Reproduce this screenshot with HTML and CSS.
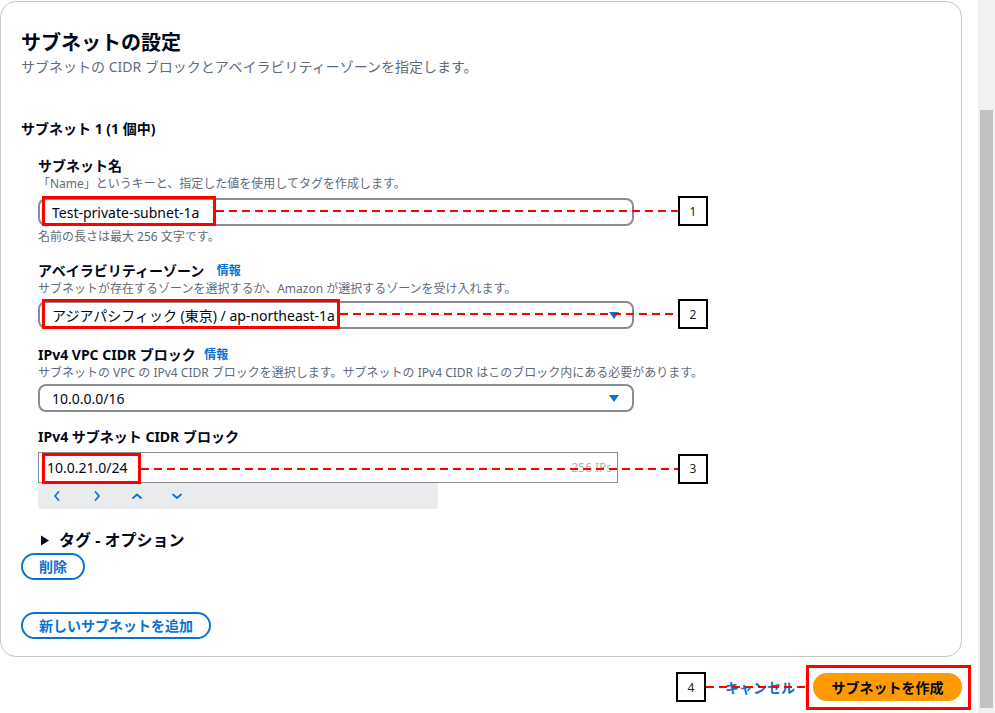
FILE: index.html
```html
<!DOCTYPE html>
<html lang="ja">
<head>
    <meta charset="UTF-8">
    <meta name="viewport" content="width=device-width, initial-scale=1.0">
    <title>サブネットの設定</title>
    <link rel="stylesheet" href="styles.css">
</head>
<body>

<div class="page">
    <main class="main">
        <section class="card">
            <h2 class="card-title">サブネットの設定</h2>
            <p class="card-desc">サブネットの CIDR ブロックとアベイラビリティーゾーンを指定します。</p>

            <h3 class="subnet-head">サブネット 1 (1 個中)</h3>

            <div class="fields">
                <!-- サブネット名 -->
                <div class="label lbl-name">サブネット名</div>
                <div class="hint">「Name」というキーと、指定した値を使用してタグを作成します。</div>
                <div class="ctl ctl-name">
                    <div class="input">Test-private-subnet-1a</div>
                    <div class="callout">
                        <span class="hl hl-name"></span>
                        <span class="dash"></span>
                        <span class="num">1</span>
                    </div>
                </div>
                <div class="hint hint-after">名前の長さは最大 256 文字です。</div>

                <!-- AZ -->
                <div class="label lbl-gap">アベイラビリティーゾーン <a class="info">情報</a></div>
                <div class="hint">サブネットが存在するゾーンを選択するか、Amazon が選択するゾーンを受け入れます。</div>
                <div class="ctl ctl-select">
                    <div class="input select">
                        <span>アジアパシフィック (東京) / ap-northeast-1a</span>
                        <span class="caret"></span>
                    </div>
                    <div class="callout">
                        <span class="hl hl-az"></span>
                        <span class="dash"></span>
                        <span class="num">2</span>
                    </div>
                </div>

                <!-- VPC CIDR -->
                <div class="label lbl-gap">IPv4 VPC CIDR ブロック <a class="info info-vpc">情報</a></div>
                <div class="hint">サブネットの VPC の IPv4 CIDR ブロックを選択します。サブネットの IPv4 CIDR はこのブロック内にある必要があります。</div>
                <div class="ctl ctl-select ctl-vpc">
                    <div class="input select">
                        <span>10.0.0.0/16</span>
                        <span class="caret"></span>
                    </div>
                </div>

                <!-- サブネット CIDR -->
                <div class="label lbl-cidr">IPv4 サブネット CIDR ブロック</div>
                <div class="ctl ctl-cidr">
                    <div class="cidr-input">
                        <span>10.0.21.0/24</span>
                        <span class="ips">256 IPs</span>
                    </div>
                    <div class="callout callout-cidr">
                        <span class="hl hl-cidr"></span>
                        <span class="dash"></span>
                        <span class="num">3</span>
                    </div>
                </div>
                <div class="stepper">
                    <svg width="12" height="12" viewBox="0 0 12 12"><path d="M7.5 2 L4 6 L7.5 10"/></svg>
                    <svg width="12" height="12" viewBox="0 0 12 12"><path d="M4.5 2 L8 6 L4.5 10"/></svg>
                    <svg width="12" height="12" viewBox="0 0 12 12"><path d="M2 8 L6 4.5 L10 8"/></svg>
                    <svg width="12" height="12" viewBox="0 0 12 12"><path d="M2 4.5 L6 8 L10 4.5"/></svg>
                </div>

                <div class="tags">
                    <svg class="tri" width="10" height="11" viewBox="0 0 10 11"><polygon points="1,0.5 9,5.5 1,10.5"/></svg>
                    <span>タグ - オプション</span>
                </div>
            </div>

            <button type="button" class="btn-outline btn-delete">削除</button>
            <button type="button" class="btn-outline btn-add">新しいサブネットを追加</button>
        </section>

        <div class="footer">
            <a class="cancel">キャンセル</a>
            <div class="cta-wrap">
                <button type="button" class="btn-primary">サブネットを作成</button>
                <span class="hl hl-cta"></span>
                <div class="callout-left">
                    <span class="num">4</span>
                    <span class="dash"></span>
                </div>
            </div>
        </div>
    </main>

    <div class="scrollbar"><div class="thumb"></div></div>
</div>

</body>
</html>
```

FILE: styles.css
```css
html, body {
    margin: 0;
    padding: 0;
    height: 100%;
    overflow: hidden;
    background: #fff;
}
body {
    font-family: "Noto Sans", "Noto Sans CJK JP", sans-serif;
    color: #000716;
    font-size: 14px;
}
.page {
    display: flex;
    height: 713px;
}
.main {
    width: 978px;
    padding-top: 1px;
}
.card {
    width: 962px;
    box-sizing: border-box;
    border: 1px solid #c6c6cd;
    border-radius: 16px;
    padding: 29px 20px 17px 20px;
}
.card-title {
    margin: 0;
    font-size: 20px;
    line-height: 24px;
    font-weight: 700;
}
.card-desc {
    margin: 2px 0 0;
    font-size: 14px;
    line-height: 20px;
    color: #5f6b7a;
}
.subnet-head {
    margin: 42px 0 0;
    font-size: 14px;
    line-height: 20px;
    font-weight: 700;
}
.fields {
    padding-left: 17px;
}
.label {
    height: 20px;
    display: flex;
    align-items: center;
    font-size: 14px;
    line-height: 20px;
    font-weight: 700;
    white-space: pre;
}
.lbl-name {
    margin-top: 17px;
}
.lbl-gap {
    margin-top: 16px;
}
.lbl-cidr {
    margin-top: 15px;
}
.info {
    margin-left: 9px;
    font-size: 12px;
    line-height: 16px;
    font-weight: 700;
    color: #0972d3;
}
.info-vpc {
    margin-left: 5px;
}
.hint {
    height: 16px;
    font-size: 12px;
    line-height: 16px;
    color: #5f6b7a;
}
.hint-after {
    margin-top: 3px;
}

/* controls */
.ctl {
    position: relative;
    width: 596px;
}
.ctl-name {
    margin-top: 6px;
}
.ctl-select {
    margin-top: 4px;
}
.ctl-vpc {
    margin-top: 3px;
}
.ctl-cidr {
    margin-top: 5px;
    width: 580px;
}
.input {
    height: 28px;
    box-sizing: border-box;
    border: 2px solid #8c8c94;
    border-radius: 8px;
    padding: 0 13px 0 12px;
    display: flex;
    align-items: center;
    font-size: 14px;
}
.select {
    justify-content: space-between;
}
.caret {
    width: 0;
    height: 0;
    border-left: 5px solid transparent;
    border-right: 5px solid transparent;
    border-top: 7px solid #0972d3;
}
.cidr-input {
    height: 31px;
    box-sizing: border-box;
    border: 1px solid #8c8c94;
    padding: 0 5px 0 8px;
    display: flex;
    align-items: center;
    justify-content: space-between;
    font-size: 14px;
}
.ips {
    font-size: 12px;
    color: #b4b6ba;
}
.stepper {
    width: 400px;
    height: 26px;
    box-sizing: border-box;
    background: #e9ebed;
    border-radius: 0 0 4px 4px;
    display: flex;
    align-items: center;
    gap: 28px;
    padding-left: 13px;
}
.stepper path {
    fill: none;
    stroke: #0972d3;
    stroke-width: 1.8;
    stroke-linecap: round;
    stroke-linejoin: round;
}
.tags {
    margin-top: 20px;
    height: 22px;
    display: flex;
    align-items: center;
    gap: 9px;
    padding-left: 2px;
    font-size: 16px;
    line-height: 22px;
    font-weight: 700;
}
.tri polygon {
    fill: #000716;
}

/* buttons */
.btn-outline {
    display: block;
    height: 27px;
    box-sizing: border-box;
    border: 2px solid #0972d3;
    border-radius: 14px;
    background: #fff;
    color: #0972d3;
    font-family: inherit;
    font-size: 14px;
    font-weight: 700;
    line-height: 1;
    padding: 0 16px;
}
.btn-delete {
    margin-top: 2px;
}
.btn-add {
    margin-top: 32px;
}

.footer {
    width: 962px;
    display: flex;
    justify-content: flex-end;
    align-items: center;
    gap: 18px;
    padding-top: 16px;
}
.cancel {
    color: #0972d3;
    font-weight: 700;
    font-size: 14px;
}
.cta-wrap {
    position: relative;
}
.btn-primary {
    display: block;
    height: 28px;
    width: 149px;
    border: none;
    border-radius: 14px;
    background: #ff9900;
    color: #000716;
    font-family: inherit;
    font-size: 14px;
    font-weight: 700;
    padding: 0;
}

/* annotations */
.callout {
    position: absolute;
    left: 4px;
    top: -2px;
    width: 666px;
    height: 30px;
    display: flex;
    align-items: center;
}
.callout-cidr {
    top: 1px;
    height: 31px;
}
.hl {
    box-sizing: border-box;
    border: 3px solid #ff0000;
    height: 100%;
    flex: none;
}
.hl-name {
    width: 174px;
}
.hl-az {
    width: 298px;
}
.hl-cidr {
    width: 99px;
}
.hl-cta {
    position: absolute;
    left: -7px;
    right: -9px;
    top: -8px;
    bottom: -9px;
    height: auto;
}
.dash {
    flex: 1;
    height: 2px;
    background: repeating-linear-gradient(90deg, #ff0000 0 8px, transparent 8px 13px);
}
.num {
    flex: none;
    width: 30px;
    height: 30px;
    box-sizing: border-box;
    border: 2px solid #000;
    background: #fff;
    display: flex;
    align-items: center;
    justify-content: center;
    font-size: 12px;
    color: #222;
}
.callout-left {
    position: absolute;
    right: calc(100% + 7px);
    top: -1px;
    width: 130px;
    height: 30px;
    display: flex;
    align-items: center;
}

/* scrollbar */
.scrollbar {
    width: 17px;
    background: #f1f1f1;
}
.thumb {
    margin: 110px 2px 0;
    height: 598px;
    background: #c1c1c1;
}
```
